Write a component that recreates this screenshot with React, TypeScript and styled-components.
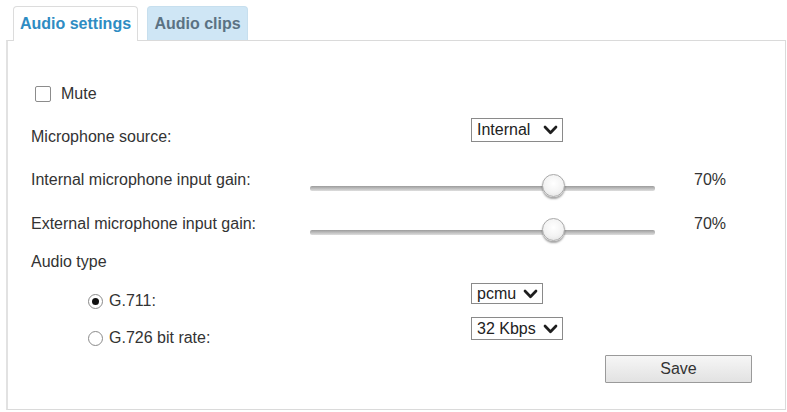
import React from "react";
import styled, { createGlobalStyle } from "styled-components";

const Global = createGlobalStyle`
  html, body { margin: 0; padding: 0; background: #ffffff; }
  body {
    font-family: "Liberation Sans", Arial, Helvetica, sans-serif;
    font-size: 16px;
    color: #333333;
  }
  * { box-sizing: border-box; }
`;

const Page = styled.div`
  width: 787px;
  height: 412px;
  padding: 6px 1px 0 6px;
`;

const TabBar = styled.div`
  display: flex;
  gap: 9px;
  padding-left: 7px;
  height: 34px;
  position: relative;
  z-index: 1;
`;

const Tab = styled.div<{ $active?: boolean }>`
  height: ${(p) => (p.$active ? 35 : 34)}px;
  display: flex;
  align-items: center;
  justify-content: center;
  white-space: nowrap;
  font-weight: bold;
  font-size: 16px;
  border: 1px solid ${(p) => (p.$active ? "#dcdcdc" : "#c7dfee")};
  border-bottom: none;
  border-radius: 4px 4px 0 0;
  background: ${(p) => (p.$active ? "#ffffff" : "#cfe6f5")};
  color: ${(p) => (p.$active ? "#2e8cc3" : "#5b7283")};
  width: ${(p) => (p.$active ? 125 : 101)}px;
`;

const Panel = styled.div`
  width: 780px;
  height: 370px;
  border: 1px solid #dadada;
  border-left: 2px solid #e2e2e2;
  padding: 35px 0 0 23px;
`;

const Row = styled.div<{ $h: number }>`
  display: grid;
  grid-template-columns: 279px 345px 1fr;
  align-items: start;
  height: ${(p) => p.$h}px;
`;

const Label = styled.div<{ $top: number; $indent?: number }>`
  line-height: 18px;
  margin-top: ${(p) => p.$top}px;
  padding-left: ${(p) => p.$indent ?? 0}px;
  white-space: nowrap;
  display: flex;
  align-items: center;
`;

const CheckBox = styled.span`
  width: 16px;
  height: 16px;
  border: 1px solid #8c8c8c;
  border-radius: 2px;
  background: #fff;
  margin-left: 4px;
  margin-right: 10px;
  flex: none;
`;

const Radio = styled.span<{ $checked?: boolean }>`
  width: 15px;
  height: 15px;
  border-radius: 50%;
  border: 1px solid #8a8a8a;
  background: #fff;
  margin-right: 6px;
  flex: none;
  display: flex;
  align-items: center;
  justify-content: center;
  &::after {
    content: "";
    width: 7px;
    height: 7px;
    border-radius: 50%;
    background: ${(p) => (p.$checked ? "#111" : "transparent")};
  }
`;

const SelectBox = styled.div<{ $w: number; $h: number; $top: number }>`
  width: ${(p) => p.$w}px;
  height: ${(p) => p.$h}px;
  margin-top: ${(p) => p.$top}px;
  margin-left: 161px;
  border: 1px solid #8a8a8a;
  background: #fff;
  display: flex;
  align-items: center;
  justify-content: space-between;
  padding: 0 4px 0 5px;
  font-size: 16px;
  color: #222;
  white-space: nowrap;
`;

const Chevron = () => (
  <svg width="15" height="10" viewBox="0 0 15 10">
    <path
      d="M2 2 L7.5 7.8 L13 2"
      fill="none"
      stroke="#1e1e1e"
      strokeWidth="2.7"
      strokeLinecap="round"
      strokeLinejoin="round"
    />
  </svg>
);

const Select = ({ value, w, h, top }: { value: string; w: number; h: number; top: number }) => (
  <SelectBox $w={w} $h={h} $top={top}>
    <span>{value}</span>
    <Chevron />
  </SelectBox>
);

const SliderBox = styled.div`
  position: relative;
  width: 345px;
  height: 26px;
  margin-top: 16px;
`;

const Track = styled.div`
  position: absolute;
  left: 0;
  right: 0;
  top: 12px;
  height: 5px;
  border-radius: 2px;
  background: linear-gradient(#9c9c9c, #c4c4c4 60%, #dedede);
`;

const Thumb = styled.div`
  position: absolute;
  top: 0;
  width: 23px;
  height: 23px;
  border-radius: 50%;
  border: 1px solid #a9a9a9;
  background: radial-gradient(circle at 50% 40%, #ffffff 0%, #f3f3f3 55%, #dcdcdc 100%);
  box-shadow: 0 2px 2px rgba(0, 0, 0, 0.35);
`;

const Slider = ({ value }: { value: number }) => (
  <SliderBox>
    <Track />
    <Thumb style={{ left: `calc(${value}% - 10px)` }} />
  </SliderBox>
);

const Value = styled.div`
  margin-top: 13px;
  line-height: 18px;
  padding-left: 39px;
`;

const SaveRow = styled.div`
  display: flex;
  justify-content: flex-end;
  padding-right: 33px;
  margin-top: 3px;
`;

const SaveButton = styled.button`
  width: 147px;
  height: 28px;
  border: 1px solid #9a9a9a;
  border-radius: 1px;
  background: linear-gradient(#f6f6f6, #e2e2e2);
  font-family: "Liberation Sans", Arial, sans-serif;
  font-size: 16px;
  color: #333;
  padding: 0;
`;

export default function App() {
  return (
    <>
      <Global />
      <Page>
        <TabBar>
          <Tab $active>Audio settings</Tab>
          <Tab>Audio clips</Tab>
        </TabBar>
        <Panel>
          <Row $h={36}>
            <Label $top={9}>
              <CheckBox />
              Mute
            </Label>
          </Row>
          <Row $h={46}>
            <Label $top={16}>Microphone source:</Label>
            <Select value="Internal" w={92} h={24} top={6} />
          </Row>
          <Row $h={44}>
            <Label $top={13}>Internal microphone input gain:</Label>
            <Slider value={70} />
            <Value>70%</Value>
          </Row>
          <Row $h={44}>
            <Label $top={13}>External microphone input gain:</Label>
            <Slider value={70} />
            <Value>70%</Value>
          </Row>
          <Row $h={32}>
            <Label $top={7}>Audio type</Label>
          </Row>
          <Row $h={38}>
            <Label $top={14} $indent={57}>
              <Radio $checked />
              G.711:
            </Label>
            <Select value="pcmu" w={72} h={21} top={5} />
          </Row>
          <Row $h={36}>
            <Label $top={13} $indent={57}>
              <Radio />
              G.726 bit rate:
            </Label>
            <Select value="32 Kbps" w={92} h={23} top={1} />
          </Row>
          <SaveRow>
            <SaveButton>Save</SaveButton>
          </SaveRow>
        </Panel>
      </Page>
    </>
  );
}
